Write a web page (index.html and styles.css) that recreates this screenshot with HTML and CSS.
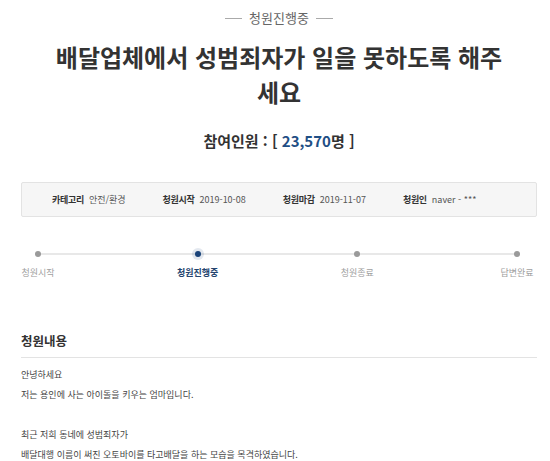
FILE: index.html
```html
<!DOCTYPE html>
<html lang="ko">
<head>
    <meta charset="UTF-8">
    <meta name="viewport" content="width=device-width, initial-scale=1.0">
    <title>청원진행중</title>
    <link rel="stylesheet" href="styles.css">
</head>
<body>
    <!-- Petition header -->
    <div class="petition">
        <p class="status-tag">청원진행중</p>
        <h1 class="petition-title">배달업체에서 성범죄자가 일을 못하도록 해주세요</h1>
        <p class="petition-count">참여인원 : [ <span class="count-num">23,570</span>명 ]</p>

        <!-- Info bar -->
        <ul class="info-bar">
            <li><b>카테고리</b> <span>안전/환경</span></li>
            <li><b>청원시작</b> <span>2019-10-08</span></li>
            <li><b>청원마감</b> <span>2019-11-07</span></li>
            <li><b>청원인</b> <span>naver - ***</span></li>
        </ul>

        <!-- Progress steps -->
        <ol class="steps">
            <li><i class="dot"></i><span>청원시작</span></li>
            <li class="active"><i class="dot"></i><span>청원진행중</span></li>
            <li><i class="dot"></i><span>청원종료</span></li>
            <li><i class="dot"></i><span>답변완료</span></li>
        </ol>

        <!-- Petition body -->
        <h2 class="section-title">청원내용</h2>
        <div class="petition-body">
            <p>안녕하세요<br>저는 용인에 사는 아이돌을 키우는 엄마입니다.</p>
            <p>최근 저희 동네에 성범죄자가<br>배달대행 이름이 써진 오토바이를 타고배달을 하는 모습을 목격하였습니다.</p>
        </div>
    </div>
</body>
</html>
```

FILE: styles.css
```css
/* Reset */
body, h1, h2, p, ul, ol, li {
    margin: 0;
    padding: 0;
    box-sizing: border-box;
}

body {
    font-family: "Noto Sans CJK KR", "Noto Sans", sans-serif;
    color: #333;
    background: #fff;
}

.petition {
    padding: 0 13px 0 21px;
}

/* Status tag with side lines */
.status-tag {
    display: flex;
    justify-content: center;
    align-items: center;
    gap: 7px;
    padding-top: 8px;
    font-size: 13px;
    line-height: 20px;
    color: #666;
}

.status-tag::before,
.status-tag::after {
    content: "";
    width: 17px;
    height: 1px;
    background: #aaa;
}

/* Title */
.petition-title {
    margin-top: 11px;
    padding: 0 32px;
    font-size: 24px;
    line-height: 35px;
    font-weight: bold;
    text-align: center;
    color: #333;
}

.petition-count {
    margin-top: 20px;
    font-size: 15px;
    line-height: 24px;
    font-weight: bold;
    text-align: center;
    color: #333;
}

.count-num {
    color: #1f4f85;
}

/* Info bar */
.info-bar {
    list-style: none;
    margin-top: 29px;
    height: 35px;
    display: flex;
    align-items: center;
    gap: 37px;
    padding-left: 30px;
    background: #f6f6f6;
    border: 1px solid #e3e3e3;
    border-radius: 2px;
    font-size: 9px;
    color: #555;
}

.info-bar li {
    display: flex;
    gap: 5px;
}

.info-bar b {
    color: #333;
    letter-spacing: -0.3px;
}

/* Progress steps */
.steps {
    list-style: none;
    position: relative;
    display: flex;
    justify-content: space-between;
    margin: 34px 20px 0 17px;
}

.steps::before {
    content: "";
    position: absolute;
    top: 2px;
    left: 0;
    right: 0;
    height: 2px;
    background: #e8e8e8;
}

.steps li {
    width: 0;
    display: flex;
    flex-direction: column;
    align-items: center;
    position: relative;
}

.steps .dot {
    width: 6px;
    height: 6px;
    border-radius: 50%;
    background: #9a9a9a;
}

.steps span {
    margin-top: 10px;
    font-size: 9px;
    line-height: 12px;
    white-space: nowrap;
    color: #a0a0a0;
}

.steps .active .dot {
    background: #1a4379;
    box-shadow: 0 0 0 3px rgba(26, 67, 121, 0.12);
}

.steps .active span {
    font-weight: bold;
    color: #24446e;
}

/* Body section */
.section-title {
    margin-top: 52px;
    padding-bottom: 6px;
    border-bottom: 1px solid #e3e3e3;
    font-size: 12.5px;
    line-height: 20px;
    font-weight: bold;
    color: #333;
}

.petition-body {
    margin-top: 7px;
    font-size: 9px;
    line-height: 20px;
    color: #444;
}

.petition-body p + p {
    margin-top: 20px;
}
```
